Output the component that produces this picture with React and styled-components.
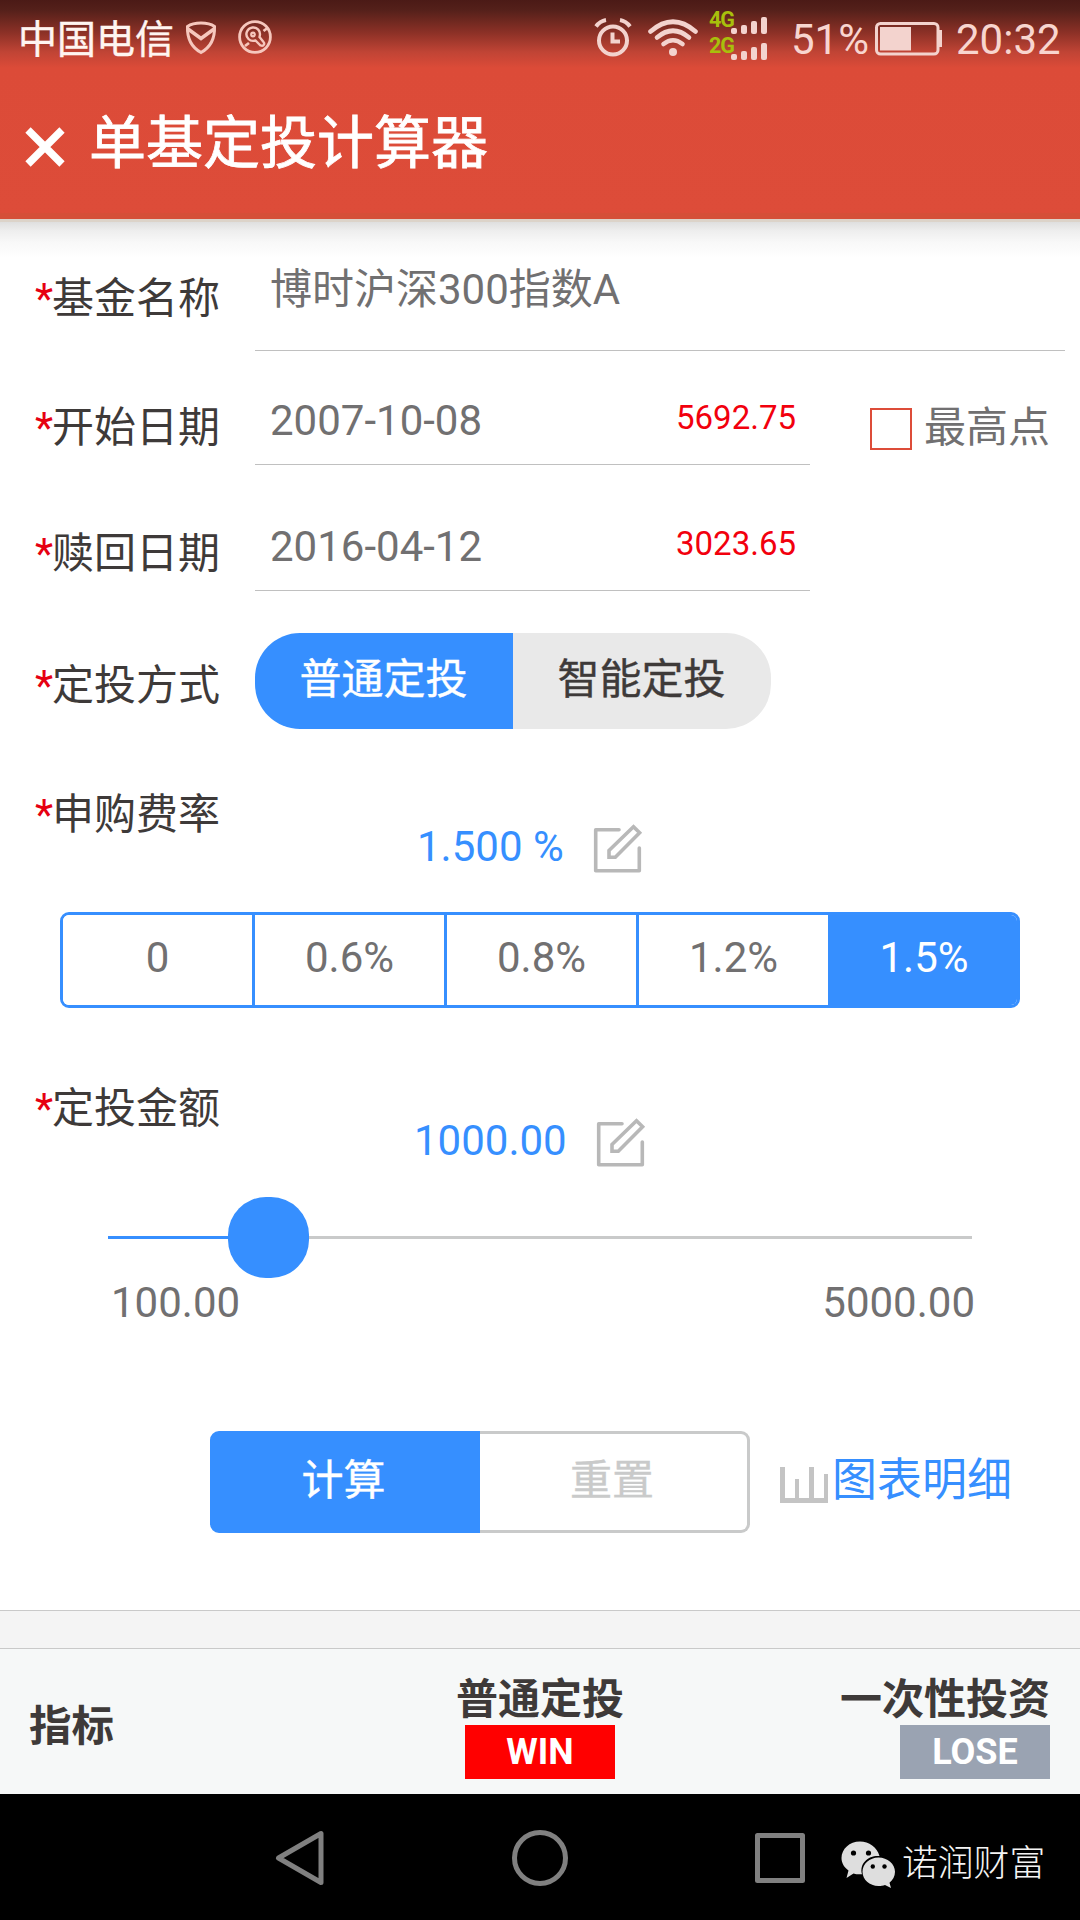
import React from "react";
import styled, { createGlobalStyle } from "styled-components";

const GlobalStyle = createGlobalStyle`
  * { box-sizing: border-box; }
  body { margin: 0; background: #fff; }
`;

const BLUE = "#368fff";

const Screen = styled.div`
  display: flex;
  flex-direction: column;
  width: 1080px;
  height: 1920px;
  overflow: hidden;
  background: #fff;
  color: #3e3a39;
  font-family: Roboto, "Noto Sans CJK SC", sans-serif;
  font-size: 42px;
  line-height: 48px;
  white-space: nowrap;
`;

const Header = styled.header`
  height: 222px;
  flex: none;
  background: linear-gradient(180deg, #4b1a16 0, #54201a 10px, #8a3026 32px, #c04435 52px, #dc4b38 68px, #dd4c39 100%);
  border-bottom: 3px solid #dcd3c9;
  box-shadow: inset 0 -6px 0 #d54f38;
`;

const StatusBar = styled.div`
  display: flex;
  height: 78px;
  color: #f8d5cf;
`;

const Carrier = styled.span`
  margin: 16px 0 0 18px;
  width: 167px;
  font-size: 39px;
  color: #fff5f1;
  -webkit-text-stroke: 0.4px #fff5f1;
`;

const StatusIcon = styled.svg`
  display: block;
  flex: none;
  margin-top: ${(p) => p.$top}px;
  margin-left: ${(p) => p.$left || 0}px;
`;

const StatusRight = styled.div`
  display: flex;
  margin-left: auto;
  padding-right: 18px;
`;

const Networks = styled.div`
  display: flex;
  flex-direction: column;
  margin: 5px 0 0 10px;
`;

const Network = styled.div`
  display: flex;
  height: 26px;
  width: 61px;
  font-size: 21.5px;
  line-height: 29px;
  letter-spacing: -1px;
  font-weight: 700;
  color: #a8bf0c;
`;

const Bars = styled.div`
  display: flex;
  align-items: flex-end;
  gap: 4px;
  height: 29px;
  margin-left: -3px;
`;

const Bar = styled.i`
  width: 6px;
  height: ${(p) => p.$h}px;
  border-radius: 2px;
  background: #f3d3ce;
`;

const StatusText = styled.span`
  margin: 16px 0 0 ${(p) => p.$left}px;
  width: ${(p) => p.$width}px;
  font-size: 42px;
  font-weight: 400;
`;

const TitleBar = styled.div`
  display: flex;
  padding-left: 25px;
`;

const Title = styled.h1`
  margin: 34px 0 0 24px;
  font-size: 57px;
  line-height: 64px;
  font-weight: 400;
  color: #fff;
  -webkit-text-stroke: 0.8px #fff;
`;

const Form = styled.main`
  height: 1388px;
  flex: none;
  background: linear-gradient(180deg, #dfdfdf 0, #eeeeee 9px, #f8f8f8 20px, #fff 36px);
`;

const Row = styled.div`
  display: flex;
  height: ${(p) => p.$h}px;
`;

const LabelText = styled.label`
  flex: none;
  width: 255px;
  padding: ${(p) => p.$top}px 0 0 35px;
`;

const Star = styled.span`
  margin-right: -1px;
  color: #e60012;
`;

const Field = styled.div`
  display: flex;
  justify-content: space-between;
  width: ${(p) => p.$w}px;
  padding: ${(p) => p.$top}px 14px 0 15px;
  border-bottom: 1px solid #c0c0c0;
  color: #717071;
`;

const IndexValue = styled.span`
  margin-top: -3px;
  font-size: 33px;
  color: #f2000d;
`;

const Check = styled.label`
  display: flex;
  margin: 53px 0 0 60px;
  gap: 12px;
  color: #717071;
`;

const Box = styled.span`
  width: 42px;
  height: 42px;
  margin-top: 4px;
  border: 2px solid #dd4c39;
  background: #fff;
`;

const Pill = styled.div`
  display: flex;
  width: 516px;
  height: 96px;
  margin-top: 42px;
  border-radius: 45px;
  overflow: hidden;
`;

const PillOption = styled.button`
  flex: 1;
  border: 0;
  padding: 0 1px 2px 0;
  font: inherit;
  background: ${(p) => (p.$on ? BLUE : "#e9e9e9")};
  color: ${(p) => (p.$on ? "#fff" : "#3e3a39")};
  -webkit-text-stroke: 0.4px currentColor;
`;

const Value = styled.div`
  display: flex;
  padding-left: ${(p) => p.$left}px;
  color: ${BLUE};
`;

const ValueText = styled.span`
  width: ${(p) => p.$w}px;
  padding-top: ${(p) => p.$top}px;
`;

const IconSlot = styled.div`
  padding-top: ${(p) => p.$top}px;
`;

const Rates = styled.div`
  display: flex;
  width: 960px;
  height: 96px;
  margin: 36px 0 0 60px;
  border: 3px solid ${BLUE};
  border-radius: 9px;
  overflow: hidden;
  background: #fff;
`;

const Rate = styled.button`
  flex: 0 0 ${(p) => (p.$last ? 186 : 192)}px;
  border: 0;
  border-right: ${(p) => (p.$last ? 0 : "3px")} solid ${BLUE};
  padding: 0 0 4px;
  font: inherit;
  background: ${(p) => (p.$on ? BLUE : "#fff")};
  color: ${(p) => (p.$on ? "#fff" : "#717071")};
`;

const Slider = styled.div`
  display: flex;
  align-items: center;
  height: 81px;
  margin: 29px 108px 0;
`;

const Track = styled.div`
  height: 3px;
  background: ${(p) => (p.$filled ? BLUE : "#c9caca")};
  flex: ${(p) => (p.$filled ? "0 0 120px" : "1")};
`;

const Thumb = styled.div`
  width: 81px;
  height: 81px;
  border-radius: 38px;
  background: ${BLUE};
`;

const Limits = styled.div`
  display: flex;
  justify-content: space-between;
  padding: 1px 105px 0 111px;
  color: #717071;
`;

const Actions = styled.div`
  display: flex;
  margin: 104px 0 0 210px;
  height: 102px;
`;

const Action = styled.button`
  width: 270px;
  padding: 0 3px 2px 0;
  font: inherit;
  border: 3px solid ${(p) => (p.$primary ? BLUE : "#c9caca")};
  border-left-width: ${(p) => (p.$primary ? "3px" : 0)};
  border-radius: ${(p) => (p.$primary ? "9px 0 0 9px" : "0 9px 9px 0")};
  background: ${(p) => (p.$primary ? BLUE : "#fff")};
  color: ${(p) => (p.$primary ? "#fff" : "#c9caca")};
  -webkit-text-stroke: 0.4px currentColor;
`;

const ChartLink = styled.a`
  display: flex;
  margin-left: 30px;
  padding-top: 26px;
  gap: 4px;
  font-size: 45px;
  color: ${BLUE};
`;

const ChartIcon = styled.svg`
  display: block;
  margin-top: 10px;
`;

const Divider = styled.div`
  height: 39px;
  flex: none;
  border: solid #c9c9c9;
  border-width: 1px 0;
  background: #f4f4f4;
`;

const TableHead = styled.section`
  display: grid;
  grid-template-columns: 360px 360px 360px;
  height: 145px;
  flex: none;
  padding-top: 27px;
  background: #f6f8f8;
  font-weight: 700;
`;

const Metric = styled.div`
  padding: 27px 0 0 29px;
  font-size: 42.5px;
`;

const Column = styled.div`
  display: flex;
  flex-direction: column;
  align-items: ${(p) => (p.$end ? "flex-end" : "center")};
  padding-right: ${(p) => (p.$end ? 30 : 0)}px;
`;

const Result = styled.span`
  width: 150px;
  height: 54px;
  margin-top: 1px;
  text-align: center;
  font-size: 36px;
  line-height: 54px;
  color: #fff;
  background: ${(p) => (p.$win ? "#ff0000" : "#9aa3b2")};
`;

const NavBar = styled.nav`
  display: flex;
  flex: none;
  height: 126px;
  background: #000;
`;

const NavIcon = styled.svg`
  display: block;
  flex: none;
  margin: 32px 0 0 ${(p) => p.$left}px;
`;

const Account = styled.div`
  display: flex;
  margin: 46px 0 0 29px;
  gap: 7px;
  font-size: 35.8px;
  font-weight: 300;
  color: #f4f4f4;
`;

const ChatLogo = styled.svg`
  display: block;
  margin-top: 1px;
`;

const Label = ({ top, children }) => (
  <LabelText $top={top}>
    <Star>*</Star>
    {children}
  </LabelText>
);

const EditIcon = () => (
  <svg width="50" height="50" viewBox="0 0 50 50" fill="none" stroke="#b8b8b8" strokeWidth="3.6">
    <path d="M26 5.7H2.7V46.7H46.3V24" strokeLinejoin="round" strokeLinecap="round" />
    <path d="M16 33.3V26.5L40.5 2.8L46.6 8.8L22.3 33.3Z" />
  </svg>
);

const rates = ["0", "0.6%", "0.8%", "1.2%", "1.5%"];

const Signal = ({ name }) => (
  <Network>
    {name}
    <Bars>
      {[6, 9, 13, 17].map((h) => (
        <Bar key={h} $h={h} />
      ))}
    </Bars>
  </Network>
);

export default function App() {
  return (
    <Screen>
      <GlobalStyle />
      <Header>
        <StatusBar>
          <Carrier>中国电信</Carrier>
          <StatusIcon $top={20} width="32" height="36" viewBox="0 0 32 36" fill="none" stroke="#f6c7bd" strokeWidth="3">
            <path d="M16 3C11 3 6 4 2.5 6.5C2 19 6 27 16 32.5C26 27 30 19 29.5 6.5C26 4 21 3 16 3Z" />
            <path d="M3 9L16 18.5L29 9" strokeWidth="3.5" />
          </StatusIcon>
          <StatusIcon $top={19} $left={20} width="36" height="36" viewBox="0 0 36 36" fill="none" stroke="#f6c7bd" strokeWidth="2.8">
            <circle cx="18" cy="18" r="15.4" />
            <circle cx="16" cy="15.5" r="1.8" strokeWidth="2.2" />
            <path d="M22.5 18C24.5 11.5 19.5 8 15.5 8.5C9.5 9.5 7.5 16 11.5 20C13.5 22 16 22.2 18.5 21.5L23.5 26.5Q26 27.5 27 25.5Q27.5 24 26.5 23Z" strokeWidth="2.4" />
            <path d="M26.5 12L30.5 9M8 27L12 24" />
          </StatusIcon>
          <StatusRight>
            <StatusIcon $top={17} width="38" height="40" viewBox="0 0 38 40" fill="none" stroke="#f3d3ce" strokeWidth="4">
              <circle cx="19" cy="23.5" r="14" />
              <path d="M18.5 15.5V24.5H26" strokeWidth="4" />
              <path d="M2 9.5Q6 4 12 3M36 9.5Q32 4 26 3" />
            </StatusIcon>
            <StatusIcon $top={17} $left={15} width="52" height="40" viewBox="0 0 52 40" fill="none" stroke="#f3d3ce" strokeWidth="4.6" strokeLinecap="round">
              <path d="M3.5 14.5Q26-5 48.5 14.5" />
              <path d="M10 20.5Q26 7 42 20.5" />
              <path d="M16.5 27Q26 19.5 35.5 27" />
              <circle cx="26" cy="35" r="4" fill="#f3d3ce" stroke="none" />
            </StatusIcon>
            <Networks>
              <Signal name="4G" />
              <Signal name="2G" />
            </Networks>
            <StatusText $left={21} $width={84}>51%</StatusText>
            <StatusIcon $top={22} width="68" height="34" viewBox="0 0 68 34">
              <rect x="1.5" y="1.5" width="61.5" height="30.5" rx="4" fill="none" stroke="#f3d3ce" strokeWidth="3" />
              <rect x="5" y="5" width="31" height="23.5" fill="#f3d3ce" />
              <rect x="64" y="8" width="3" height="17" fill="#f3d3ce" />
            </StatusIcon>
            <StatusText $left={13} $width={106}>20:32</StatusText>
          </StatusRight>
        </StatusBar>
        <TitleBar>
          <StatusIcon $top={49} width="40" height="40" viewBox="0 0 40 40" stroke="#fff" strokeWidth="7.5">
            <path d="M3 3L37 37M37 3L3 37" />
          </StatusIcon>
          <Title>单基定投计算器</Title>
        </TitleBar>
      </Header>

      <Form>
        <Row $h={129}>
          <Label top={53}>基金名称</Label>
          <Field $w={810} $top={44}>博时沪深300指数A</Field>
        </Row>
        <Row $h={114}>
          <Label top={53}>开始日期</Label>
          <Field $w={555} $top={46}>
            2007-10-08<IndexValue>5692.75</IndexValue>
          </Field>
          <Check>
            <Box />
            最高点
          </Check>
        </Row>
        <Row $h={126}>
          <Label top={65}>赎回日期</Label>
          <Field $w={555} $top={58}>
            2016-04-12<IndexValue>3023.65</IndexValue>
          </Field>
        </Row>
        <Row $h={200}>
          <Label top={71}>定投方式</Label>
          <Pill>
            <PillOption $on>普通定投</PillOption>
            <PillOption>智能定投</PillOption>
          </Pill>
        </Row>
        <Row $h={85}>
          <Label top={0}>申购费率</Label>
          <Value $left={162}>
            <ValueText $w={176} $top={32}>1.500 %</ValueText>
            <IconSlot $top={33}>
              <EditIcon />
            </IconSlot>
          </Value>
        </Row>
        <Rates>
          {rates.map((r, i) => (
            <Rate key={r} $on={i === 4} $last={i === rates.length - 1}>
              {r}
            </Rate>
          ))}
        </Rates>
        <Row $h={160}>
          <Label top={77}>定投金额</Label>
          <Value $left={159}>
            <ValueText $w={182} $top={109}>1000.00</ValueText>
            <IconSlot $top={110}>
              <EditIcon />
            </IconSlot>
          </Value>
        </Row>
        <Slider>
          <Track $filled />
          <Thumb />
          <Track />
        </Slider>
        <Limits>
          <span>100.00</span>
          <span>5000.00</span>
        </Limits>
        <Actions>
          <Action $primary>计算</Action>
          <Action>重置</Action>
          <ChartLink>
            <ChartIcon width="48" height="36" viewBox="0 0 48 36" fill="#c4c4c4">
              <path d="M0 0H5V31H15V12H19V31H29V0H34V31H44V7H48V36H0Z" />
            </ChartIcon>
            图表明细
          </ChartLink>
        </Actions>
      </Form>

      <Divider />
      <TableHead>
        <Metric>指标</Metric>
        <Column>
          普通定投
          <Result $win>WIN</Result>
        </Column>
        <Column $end>
          一次性投资
          <Result>LOSE</Result>
        </Column>
      </TableHead>

      <NavBar>
        <NavIcon $left={272} width="56" height="64" viewBox="0 0 56 64" fill="none" stroke="#808080" strokeWidth="5" strokeLinejoin="round">
          <path d="M49 7.5V56.5L6.5 32Z" />
        </NavIcon>
        <NavIcon $left={180} width="64" height="64" viewBox="0 0 64 64" fill="none" stroke="#808080" strokeWidth="5">
          <circle cx="32" cy="32" r="25.5" />
        </NavIcon>
        <NavIcon $left={176} width="64" height="64" viewBox="0 0 64 64" fill="none" stroke="#808080" strokeWidth="5" strokeLinejoin="round">
          <rect x="9.5" y="9.5" width="45" height="45" />
        </NavIcon>
        <Account>
          <ChatLogo width="54" height="48" viewBox="0 0 54 48">
            <path d="M19 0.5C8.5 0.5 0.5 8 0.5 17C0.5 22.5 3.5 26.5 7.5 29.5L5.5 37L12.5 32.5C15 33.3 18 33.5 21 33.2C18 22 28 14 38.5 15C36 6 28 0.5 19 0.5Z" fill="#dedede" />
            <path d="M37.5 16.5C28.5 16.5 21.5 23 21.5 30.8C21.5 38.5 28.5 45 37.5 45C40 45 42 44.6 44 44L50 47L48.5 41.8C51.8 39 54 35.3 54 30.8C54 23 46.5 16.5 37.5 16.5Z" fill="#dedede" />
            <circle cx="12.5" cy="12" r="2.6" />
            <circle cx="27.5" cy="12" r="2.6" />
            <circle cx="31.8" cy="25.5" r="2.2" />
            <circle cx="43.5" cy="25.5" r="2.2" />
          </ChatLogo>
          诺润财富
        </Account>
      </NavBar>
    </Screen>
  );
}
